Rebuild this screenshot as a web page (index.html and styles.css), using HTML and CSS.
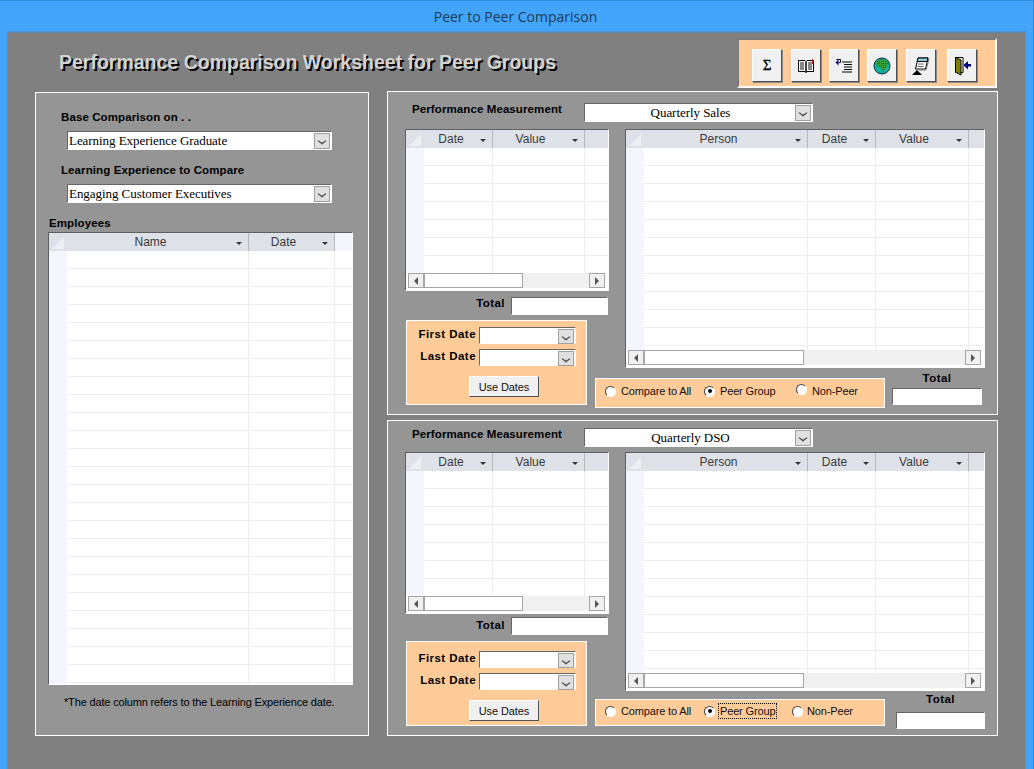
FILE: index.html
```html
<!DOCTYPE html>
<html lang="en">
<head>
<meta charset="utf-8">
<title>Peer to Peer Comparison</title>
<link rel="stylesheet" href="styles.css">
</head>
<body>
<div class="window">
  <div class="titlebar">Peer to Peer Comparison</div>
  <div class="client">
    <header class="topbar">
      <h1 class="title">Performance Comparison Worksheet for Peer Groups</h1>
      <div class="toolbar">
        <button class="tool sigma">Σ</button>
        <button class="tool gap1"><svg width="18" height="16" viewBox="0 0 18 16"><path d="M1.500 2.500h6.500l1 1 1-1h6.500v11h-6.500l-1 1-1-1h-6.500z" fill="#fff" stroke="#000"/><path d="M9 3.500v11" stroke="#000" stroke-width="1.500"/><path d="M3 5h4M3 7h4M3 9h4M3 11h4M11 5h4M11 7h4M11 9h4M11 11h4" stroke="#111"/><path d="M15.500 1v5" stroke="#b02020"/></svg></button>
        <button class="tool"><svg width="18" height="16" viewBox="0 0 18 16"><path d="M1.500 1.500h4v3h-2" fill="none" stroke="#000"/><path d="M0.500 4.500l3-3v6z" fill="#000080"/><path d="M7 4h10M9 6.500h8M9 9h8M9 11.500h8M7 14h10" stroke="#000" stroke-width="1.200"/></svg></button>
        <button class="tool"><svg width="18" height="18" viewBox="0 0 18 18"><defs><pattern id="dither" width="2" height="2" patternUnits="userSpaceOnUse"><rect width="2" height="2" fill="#3ea03a"/><rect width="1" height="1" fill="#0e5e50"/></pattern></defs><circle cx="9" cy="9" r="8" fill="#12b0a8" stroke="#0a3030"/><path d="M3 5l6-3 6 3-1 5-4 5-2-4-4-2z" fill="url(#dither)"/></svg></button>
        <button class="tool gap1"><svg width="20" height="20" viewBox="0 0 20 20"><path d="M7 2h10l-2.500 11h-10z" fill="#fff" stroke="#000"/><path d="M7 2h10l-.8 3.500h-10z" fill="#8fd0e0" stroke="#000"/><path d="M7 8h6M6.500 10.500h6" stroke="#666"/><path d="M18 3l-3 11h-7" fill="none" stroke="#777"/><path d="M1 19l5-5 5 5z" fill="#000"/></svg></button>
        <button class="tool gap3"><svg width="20" height="20" viewBox="0 0 20 20"><path d="M3.500 1.500h7.500v15h-7.500z" fill="#fff" stroke="#000"/><path d="M3.500 1.500l5.500 2.500v15l-5.500-3z" fill="#808000" stroke="#000"/><path d="M11.500 9l4.500-4v3h3v2.500h-3v3z" fill="#000080"/></svg></button>
      </div>
    </header>
    <main class="workspace">
      <section class="panel left-panel">
        <div class="label base-label">Base Comparison on . .</div>
        <div class="select base-select"><span>Learning Experience Graduate</span><i class="drop"></i></div>
        <div class="label base-label compare-label">Learning Experience to Compare</div>
        <div class="select base-select"><span>Engaging Customer Executives</span><i class="drop"></i></div>
        <div class="label employees-label">Employees</div>
        <div class="grid employees">
          <div class="grid-head">
            <div class="corner"></div>
            <div class="hcell w-name"><span>Name</span><i></i></div>
            <div class="hcell w-edate"><span>Date</span><i></i></div>
            <div class="hfill light"></div>
          </div>
          <div class="grid-body">
            <div class="rowhead"></div>
            <div class="col w-name"></div>
            <div class="col w-edate"></div>
            <div class="col fill"></div>
          </div>
        </div>
        <p class="note">*The date column refers to the Learning Experience date.</p>
      </section>

      <div class="right-col">
        <section class="panel measure first">
          <div class="measure-head">
            <div class="label measure-label">Performance Measurement</div>
            <div class="select measure-select"><span>Quarterly Sales</span><i class="drop"></i></div>
          </div>
          <div class="measure-body">
            <div class="left-stack">
              <div class="grid small">
                <div class="grid-head">
                  <div class="corner"></div>
                  <div class="hcell w-ldate"><span>Date</span><i></i></div>
                  <div class="hcell w-value"><span>Value</span><i></i></div>
                  <div class="hfill"></div>
                </div>
                <div class="grid-body">
                  <div class="rowhead"></div>
                  <div class="col w-ldate"></div>
                  <div class="col w-value"></div>
                  <div class="col fill"></div>
                </div>
                <div class="hscroll">
                  <b class="sbtn sleft"></b><b class="thumb thumb-s"></b><em></em><b class="sbtn sright"></b>
                </div>
              </div>
              <div class="total-row">
                <div class="label spaced total-label">Total</div>
                <div class="field total-field"></div>
              </div>
              <div class="datebox">
                <div class="label spaced">First Date</div>
                <div class="select date-select"><span></span><i class="drop"></i></div>
                <div class="label spaced">Last Date</div>
                <div class="select date-select"><span></span><i class="drop"></i></div>
                <button class="use-dates">Use Dates</button>
              </div>
            </div>
            <div class="right-stack">
              <div class="grid large">
                <div class="grid-head">
                  <div class="corner"></div>
                  <div class="hcell w-person"><span>Person</span><i></i></div>
                  <div class="hcell w-date"><span>Date</span><i></i></div>
                  <div class="hcell w-value2"><span>Value</span><i></i></div>
                  <div class="hfill"></div>
                </div>
                <div class="grid-body">
                  <div class="rowhead"></div>
                  <div class="col w-person"></div>
                  <div class="col w-date"></div>
                  <div class="col w-value2"></div>
                  <div class="col fill"></div>
                </div>
                <div class="hscroll">
                  <b class="sbtn sleft"></b><b class="thumb thumb-l"></b><em></em><b class="sbtn sright"></b>
                </div>
              </div>
              <div class="compare-row">
                <div class="radios">
                  <div class="radio"><i></i><span>Compare to All</span></div>
                  <div class="radio peer"><i class="on"></i><span>Peer Group</span></div>
                  <div class="radio nonpeer"><i></i><span>Non-Peer</span></div>
                </div>
                <div class="total-col">
                  <div class="label spaced">Total</div>
                  <div class="field"></div>
                </div>
              </div>
            </div>
          </div>
        </section>

        <section class="panel measure second">
          <div class="measure-head">
            <div class="label measure-label">Performance Measurement</div>
            <div class="select measure-select"><span>Quarterly DSO</span><i class="drop"></i></div>
          </div>
          <div class="measure-body">
            <div class="left-stack">
              <div class="grid small">
                <div class="grid-head">
                  <div class="corner"></div>
                  <div class="hcell w-ldate"><span>Date</span><i></i></div>
                  <div class="hcell w-value"><span>Value</span><i></i></div>
                  <div class="hfill"></div>
                </div>
                <div class="grid-body">
                  <div class="rowhead"></div>
                  <div class="col w-ldate"></div>
                  <div class="col w-value"></div>
                  <div class="col fill"></div>
                </div>
                <div class="hscroll">
                  <b class="sbtn sleft"></b><b class="thumb thumb-s"></b><em></em><b class="sbtn sright"></b>
                </div>
              </div>
              <div class="total-row">
                <div class="label spaced total-label">Total</div>
                <div class="field total-field"></div>
              </div>
              <div class="datebox">
                <div class="label spaced">First Date</div>
                <div class="select date-select"><span></span><i class="drop"></i></div>
                <div class="label spaced">Last Date</div>
                <div class="select date-select"><span></span><i class="drop"></i></div>
                <button class="use-dates">Use Dates</button>
              </div>
            </div>
            <div class="right-stack">
              <div class="grid large">
                <div class="grid-head">
                  <div class="corner"></div>
                  <div class="hcell w-person"><span>Person</span><i></i></div>
                  <div class="hcell w-date"><span>Date</span><i></i></div>
                  <div class="hcell w-value2"><span>Value</span><i></i></div>
                  <div class="hfill"></div>
                </div>
                <div class="grid-body">
                  <div class="rowhead"></div>
                  <div class="col w-person"></div>
                  <div class="col w-date"></div>
                  <div class="col w-value2"></div>
                  <div class="col fill"></div>
                </div>
                <div class="hscroll">
                  <b class="sbtn sleft"></b><b class="thumb thumb-l"></b><em></em><b class="sbtn sright"></b>
                </div>
              </div>
              <div class="compare-row">
                <div class="radios">
                  <div class="radio"><i></i><span>Compare to All</span></div>
                  <div class="radio peer"><i class="on"></i><span class="focus">Peer Group</span></div>
                  <div class="radio nonpeer"><i></i><span>Non-Peer</span></div>
                </div>
                <div class="total-col">
                  <div class="label spaced">Total</div>
                  <div class="field"></div>
                </div>
              </div>
            </div>
          </div>
        </section>
      </div>
    </main>
  </div>
</div>
</body>
</html>
```

FILE: styles.css
```css
* { box-sizing: border-box; }
html, body { margin: 0; padding: 0; height: 100%; overflow: hidden; }
body { background: #42a5fb; font-family: "Liberation Sans", Arial, sans-serif; font-size: 12px; color: #000; }

.window { width: 1034px; height: 769px; display: flex; flex-direction: column; padding: 0 8px 0 8px; border-top: 1px solid #2f8ad8; border-right: 1px solid #2f8ad8; }
.titlebar { height: 31px; flex: none; display: flex; align-items: center; justify-content: center; font-family: "Open Sans", sans-serif; font-size: 14px; color: #1f3a52; padding: 0 2px 0 0; }
.client { flex: 1; background: #808080; border-top: 1px solid #5e86ab; box-shadow: 0 0 0 1px #4f93d0; }

.topbar { height: 58px; display: flex; align-items: flex-start; padding: 5px 28px 0 51px; justify-content: space-between; }
.title { margin: 12px 0 0; font-size: 19.5px; line-height: 24px; font-weight: bold; color: #d2d2d2; white-space: nowrap; text-shadow: 2px 2px 0 #000; }
.toolbar { width: 260px; height: 50px; background: #ffcc99; border: 2px solid #fff; border-top-color: #7a7a7a; border-left-color: #7a7a7a; display: flex; gap: 8px; padding: 9px 0 0 13px; }
.tool { width: 30px; height: 33px; padding: 0; background: #f0f0f0; border: 1px solid; border-color: #fff #505050 #505050 #fff; box-shadow: 1px 1px 0 #8a8a8a; display: flex; align-items: center; justify-content: center; }
.sigma { font-family: "Liberation Serif", serif; font-size: 15px; font-weight: normal; color: #000; -webkit-text-stroke: .3px #000; }
.gap1 { margin-left: 1px; }
.gap3 { margin-left: 3px; }

.workspace { display: flex; align-items: flex-start; padding-left: 27px; }
.panel { background: #959595; border: 1px solid #fff; }
.left-panel { width: 334px; height: 644px; margin-top: 1px; padding-left: 12px; }
.right-col { width: 611px; margin-left: 18px; display: flex; flex-direction: column; gap: 5px; }

.label { font-size: 11.5px; font-weight: bold; line-height: 14px; letter-spacing: .1px; white-space: nowrap; color: #000; }
.label.spaced { letter-spacing: .45px; }
.base-label { margin: 17px 0 0 13px; }
.compare-label { margin-top: 13px; }
.employees-label { margin: 13px 0 0 1px; }

.select { display: flex; align-items: center; background: #fff; border: 1px solid #fff; border-top-color: #666; border-left-color: #666; font-family: "Liberation Serif", serif; font-size: 13px; letter-spacing: -.05px; line-height: 17px; color: #000; }
.select span { flex: 1; min-width: 0; white-space: nowrap; padding-left: 1px; }
.drop { flex: none; width: 16px; height: 16px; margin-right: 1px; background: #e0e0e0; border: 1px solid #a0a0a0; position: relative; }
.drop::after { content: ""; position: absolute; left: 3px; top: 3px; width: 6px; height: 6px; border: solid #555; border-width: 0 2px 2px 0; transform: scale(.8,.6) rotate(45deg); }
.base-select { width: 265px; height: 19px; margin: 7px 0 0 19px; }

.grid { background: #fff; border: 1px solid #fff; border-top-color: #5f5f5f; border-left-color: #5f5f5f; display: flex; flex-direction: column; }
.grid-head { height: 18px; flex: none; display: flex; background: #dee2e8; }
.corner { width: 18px; flex: none; position: relative; overflow: hidden; }
.corner::after { content: ""; position: absolute; left: 3px; bottom: 2px; border-style: solid; border-width: 0 0 12px 12px; border-color: transparent transparent #edf0f3 transparent; }
.hcell { flex: none; display: flex; align-items: center; border-right: 1px solid #b4b8bd; color: #3a3a3a; font-size: 12px; }
.hcell span { flex: 1; text-align: center; padding-right: 2px; }
.hcell.w-edate span { padding-right: 4px; }
.hcell.w-value span, .hcell.w-value2 span { padding-right: 4px; }
.hcell i { flex: none; width: 0; height: 0; margin: 3px 6px 0 0; border: solid transparent; border-width: 3px 3px 0; border-top-color: #333; }
.hfill { flex: 1; }
.hfill.light { background: #f5f6fd; }
.grid-body { flex: 1; min-height: 0; display: flex; background: repeating-linear-gradient(#fff 0 17px, #ededed 17px 18px); }
.rowhead { width: 18px; flex: none; background: #f5f6fd; }
.col { flex: none; border-right: 1px solid #ededed; }
.col.fill { flex: 1; border-right: 0; }

.w-name { width: 182px; }
.w-edate { width: 86px; }
.w-date { width: 68px; }
.w-ldate { width: 69px; }
.w-value { width: 92px; }
.w-person { width: 164px; }
.w-value2 { width: 93px; }

.employees { width: 305px; height: 453px; margin-top: 2px; }
.note { margin: 10px 0 0 16px; font-size: 11px; letter-spacing: -.16px; line-height: 14px; white-space: nowrap; color: #000; }

.measure.first { height: 324px; padding-top: 10px; }
.measure.second { height: 316px; padding-top: 6px; }
.measure-head { display: flex; align-items: flex-start; padding-left: 24px; }
.measure-label { width: 172px; }
.measure-select { width: 229px; height: 19px; margin-top: 1px; text-align: center; }
.measure-body { display: flex; align-items: flex-start; padding-left: 17px; }
.first .measure-body { margin-top: 7px; }
.second .measure-body { margin-top: 5px; }

.left-stack { width: 204px; flex: none; }
.right-stack { width: 360px; flex: none; margin-left: 16px; }

.small { height: 162px; }
.large { height: 239px; }

.hscroll { height: 17px; flex: none; display: flex; padding: 0 3px 2px 2px; background: #fff; }
.hscroll em { flex: 1; background: #f0f0f0; }
.sbtn { flex: none; width: 16px; height: 15px; background: #f0f0f0; border: 1px solid #a6a6a6; display: flex; align-items: center; justify-content: center; }
.sbtn::after { content: ""; width: 0; height: 0; border: solid transparent; border-width: 4px 0; }
.sleft::after { border-right: 4px solid #555; }
.sright::after { border-left: 4px solid #555; }
.thumb { flex: none; height: 15px; background: #fff; border: 1px solid #a6a6a6; }
.thumb-s { width: 99px; }
.thumb-l { width: 160px; }

.total-row { display: flex; justify-content: flex-end; padding-right: 1px; }
.first .total-row { margin-top: 6px; }
.second .total-row { margin-top: 3px; }
.total-label { margin-right: 6px; }
.first .total-label { margin-top: -1px; }
.second .total-label { margin-top: 1px; }
.field { height: 17px; background: #fff; border: 1px solid #fff; border-top-color: #666; border-left-color: #666; }
.total-field { width: 97px; height: 18px; }

.datebox { width: 181px; height: 85px; margin-left: 1px; background: #ffcc99; border: 1px solid #fff; display: grid; grid-template-columns: 72px 97px; row-gap: 5px; grid-auto-rows: 17px; align-items: center; justify-items: end; }
.first .datebox { margin-top: 5px; padding-top: 6px; }
.second .datebox { margin-top: 6px; padding-top: 9px; }
.datebox .label { padding-right: 3px; line-height: 17px; margin-top: -3px; }
.date-select { width: 97px; height: 17px; }
.date-select .drop { height: 15px; margin-top: 1px; }
.use-dates { grid-column: 1 / -1; justify-self: start; align-self: start; margin: 5px 0 0 62px; width: 70px; height: 21px; padding: 0; background: #f0f0f0; border: 1px solid; border-color: #fff #505050 #505050 #fff; font-family: inherit; font-size: 11px; letter-spacing: -.1px; color: #111; }

.compare-row { display: flex; align-items: flex-start; margin-left: -30px; }
.radios { width: 290px; flex: none; background: #ffcc99; border: 1px solid #fff; display: flex; align-items: center; padding-left: 9px; font-size: 11px; letter-spacing: -.15px; color: #111; white-space: nowrap; }
.radio { flex: none; display: flex; align-items: center; gap: 5px; width: 99px; }
.radio i { flex: none; width: 11px; height: 11px; border-radius: 50%; background: #fff; border: 1px solid #fff; border-top-color: #444; border-left-color: #444; display: flex; align-items: center; justify-content: center; }
.radio i.on::after { content: ""; width: 4px; height: 4px; border-radius: 50%; background: #000; }
.first .compare-row { margin-top: 3px; }
.first .radios { height: 30px; margin-top: 7px; padding-bottom: 4px; }
.first .nonpeer { margin-left: -7px; gap: 5px; }
.first .nonpeer i { margin-top: -4px; }
.second .compare-row { margin-top: 1px; }
.second .radios { height: 27px; margin-top: 7px; padding-bottom: 3px; }
.second .nonpeer { margin-left: -11px; gap: 4px; }
.focus { outline: 1px dotted #000; outline-offset: 1px; }

.total-col { flex: none; display: flex; flex-direction: column; align-items: center; }
.total-col .field { margin-top: 3px; }
.first .total-col { width: 90px; margin-left: 7px; }
.first .total-col .field { width: 90px; }
.second .total-col { width: 89px; margin-left: 11px; }
.second .total-col .field { width: 89px; margin-top: 6px; }
```
